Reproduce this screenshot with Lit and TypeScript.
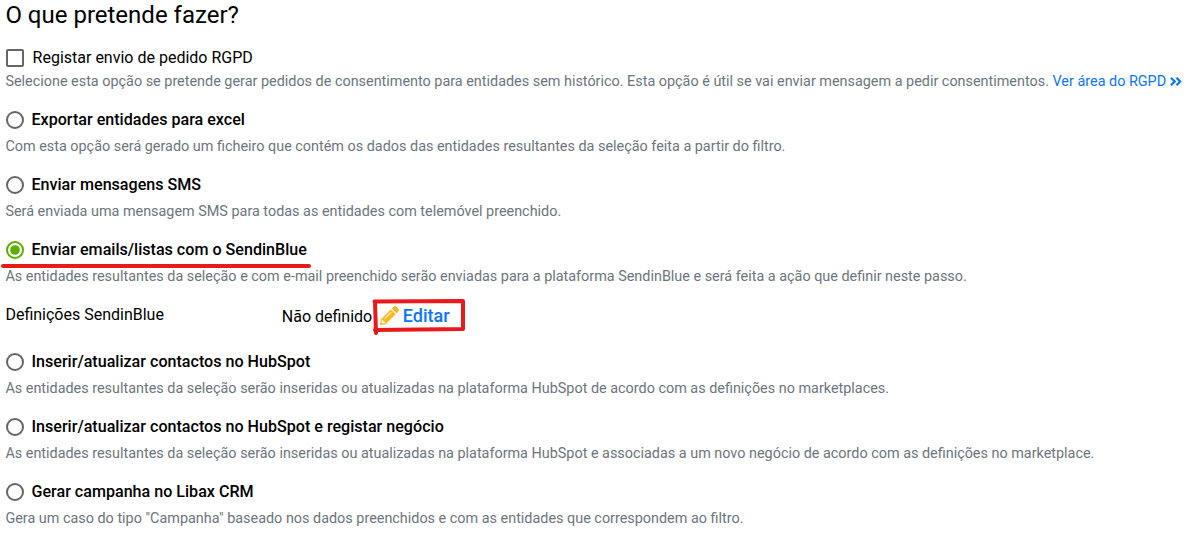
import { LitElement, html, css, svg, nothing } from "lit";
import { customElement, property, state } from "lit/decorators.js";

interface ActionOption {
  id: string;
  label: string;
  help: string;
}

const OPTIONS: ActionOption[] = [
  {
    id: "excel",
    label: "Exportar entidades para excel",
    help: "Com esta opção será gerado um ficheiro que contém os dados das entidades resultantes da seleção feita a partir do filtro.",
  },
  {
    id: "sms",
    label: "Enviar mensagens SMS",
    help: "Será enviada uma mensagem SMS para todas as entidades com telemóvel preenchido.",
  },
  {
    id: "sendinblue",
    label: "Enviar emails/listas com o SendinBlue",
    help: "As entidades resultantes da seleção e com e-mail preenchido serão enviadas para a plataforma SendinBlue e será feita a ação que definir neste passo.",
  },
  {
    id: "hubspot",
    label: "Inserir/atualizar contactos no HubSpot",
    help: "As entidades resultantes da seleção serão inseridas ou atualizadas na plataforma HubSpot de acordo com as definições no marketplaces.",
  },
  {
    id: "hubspot-deal",
    label: "Inserir/atualizar contactos no HubSpot e registar negócio",
    help: "As entidades resultantes da seleção serão inseridas ou atualizadas na plataforma HubSpot e associadas a um novo negócio de acordo com as definições no marketplace.",
  },
  {
    id: "campaign",
    label: "Gerar campanha no Libax CRM",
    help: 'Gera um caso do tipo "Campanha" baseado nos dados preenchidos e com as entidades que correspondem ao filtro.',
  },
];

@customElement("action-radio")
export class ActionRadio extends LitElement {
  static override styles = css`
    :host {
      display: block;
      height: 65px;
    }
    .label {
      position: relative;
      display: flex;
      align-items: center;
      gap: 7.5px;
      height: 24px;
      font-size: 16.1px;
      font-weight: 500;
      white-space: nowrap;
      cursor: pointer;
    }
    .radio {
      flex: none;
      width: 18px;
      height: 18px;
      margin-top: 2px;
      margin-left: 0.6px;
    }
    .ring {
      fill: #fff;
      stroke: #666;
      stroke-width: 2;
    }
    .checked .ring {
      stroke: #5cae00;
    }
    .dot {
      fill: #5cae00;
    }
    .mark {
      position: absolute;
      left: -4.4px;
      top: 27px;
      width: 310px;
      height: 4px;
      border-radius: 2px;
      background: #e81a1c;
    }
    .help {
      margin-top: 5px;
      color: #6c757d;
      font-size: 14.4px;
      line-height: 21px;
      white-space: nowrap;
    }
  `;

  @property({ type: String }) label = "";
  @property({ type: String }) help = "";
  @property({ type: Boolean }) checked = false;

  override render() {
    return html`
      <div class="label ${this.checked ? "checked" : ""}" role="radio" aria-checked=${this.checked}>
        <svg class="radio" viewBox="0 0 18 18">
          <circle class="ring" cx="9" cy="9" r="8"></circle>
          ${this.checked ? svg`<circle class="dot" cx="9" cy="9" r="4.800"></circle>` : nothing}
        </svg>
        <span>${this.label}</span>
        ${this.checked ? html`<div class="mark"></div>` : nothing}
      </div>
      <div class="help">${this.help}</div>
    `;
  }
}

@customElement("app-root")
export class AppRoot extends LitElement {
  static override styles = css`
    :host {
      display: block;
      box-sizing: border-box;
      height: 538px;
      padding-left: 5.4px;
      overflow: hidden;
      background: #fff;
      color: #000;
      font-family: Roboto, sans-serif;
      font-size: 16px;
      white-space: nowrap;
    }
    h1 {
      margin: 0;
      height: 45px;
      font-size: 24px;
      font-weight: 400;
      line-height: 30px;
    }
    .consent {
      height: 62px;
    }
    .check-label {
      display: flex;
      align-items: center;
      gap: 8.6px;
      height: 24px;
    }
    .checkbox {
      box-sizing: border-box;
      width: 18px;
      height: 18px;
      margin-top: 2px;
      margin-left: 0.6px;
      border: 2px solid #666;
      border-radius: 2px;
    }
    .help {
      color: #6c757d;
      font-size: 14.4px;
      line-height: 26px;
    }
    a {
      color: #0a75ff;
      text-decoration: none;
      cursor: pointer;
    }
    .chevrons {
      width: 12px;
      height: 9px;
      fill: none;
      stroke: #0a75ff;
      stroke-width: 2.2;
    }
    .settings {
      display: flex;
      height: 47px;
    }
    .name {
      width: 276.4px;
      line-height: 26px;
    }
    .value {
      line-height: 30px;
    }
    .edit {
      position: relative;
      display: flex;
      align-items: center;
      gap: 3.5px;
      height: 27px;
      margin-left: 8px;
      font-size: 18px;
      font-weight: 500;
    }
    .pencil {
      width: 19px;
      height: 19px;
      fill: #fdb81e;
    }
    .frame {
      position: absolute;
      left: -8.5px;
      top: -5px;
      width: 96px;
      height: 40px;
      fill: none;
      stroke: #e81a1c;
      stroke-width: 4;
      stroke-linecap: round;
      stroke-linejoin: round;
    }
  `;

  @state() private selected = "sendinblue";

  private _renderSettings() {
    return html`
      <div class="settings">
        <div class="name">Definições SendinBlue</div>
        <div class="value">Não definido</div>
        <a class="edit">
          <svg class="pencil" viewBox="0 0 512 512">
            <path d="M498 142l-46 46c-5 5-13 5-17 0L324 77c-5-5-5-12 0-17l46-46c19-19 49-19 68 0l60 60c19 19 19 49 0 68zm-214-42L22 362 0 484c-3 16 12 30 28 28l122-22 262-262c5-5 5-13 0-17L301 100c-4-5-12-5-17 0zM124 340c-5-6-5-14 0-20l154-154c6-5 14-5 20 0s5 14 0 20L144 340c-6 5-14 5-20 0zm-36 84h48v36l-64 12-32-31 12-65h36v48z"></path>
          </svg>
          Editar
          <svg class="frame" viewBox="0 0 96 40">
            <path d="M2.500 4.500L91 4L91 32L3 33M3 5L4 36"></path>
          </svg>
        </a>
      </div>
    `;
  }

  override render() {
    return html`
      <h1>O que pretende fazer?</h1>
      <div class="consent">
        <div class="check-label" role="checkbox" aria-checked="false">
          <span class="checkbox"></span>
          <span>Registar envio de pedido RGPD</span>
        </div>
        <div class="help">
          Selecione esta opção se pretende gerar pedidos de consentimento para entidades sem histórico. Esta opção é útil se vai enviar mensagem a pedir consentimentos.
          <a>Ver área do RGPD <svg class="chevrons" viewBox="0 0 12 9"><path d="M1 .8L4.700 4.500L1 8.200M6.500 .8L10.200 4.500L6.500 8.200"></path></svg></a>
        </div>
      </div>
      ${OPTIONS.map(
        (o) => html`
          <action-radio .label=${o.label} .help=${o.help} .checked=${o.id === this.selected}></action-radio>
          ${o.id === "sendinblue" && this.selected === o.id ? this._renderSettings() : nothing}
        `
      )}
    `;
  }
}
